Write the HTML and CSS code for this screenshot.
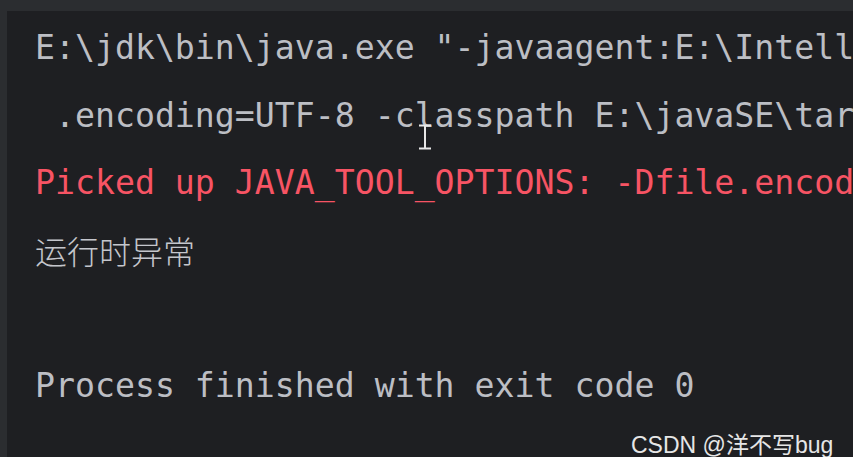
FILE: index.html
```html
<!DOCTYPE html>
<html lang="zh">
<head>
<meta charset="utf-8">
<link rel="stylesheet" href="styles.css">
</head>
<body>
<div class="topbar"></div>
<div class="main">
  <div class="gutter"></div>
  <div class="console">
    <div class="line">E:\jdk\bin\java.exe "-javaagent:E:\Intell</div>
    <div class="line"> .encoding=UTF-8 -classpath E:\javaSE\tar</div>
    <div class="line err">Picked up JAVA_TOOL_OPTIONS: -Dfile.encod</div>
    <div class="line cjk">运行时异常</div>
    <div class="line"> </div>
    <div class="line">Process finished with exit code 0</div>
  </div>
</div>
<div class="cursor"><svg width="14" height="26" viewBox="0 0 14 26"><path d="M1 1.5h12M7 1.5v23M1 24.5h12" stroke="#e8e8e8" stroke-width="2" fill="none"/></svg></div>
<div class="watermark">CSDN @洋不写bug</div>
</body>
</html>
```
FILE: styles.css
```css
html, body {
  margin: 0;
  padding: 0;
  width: 853px;
  height: 457px;
  overflow: hidden;
  background: #1e1f22;
}
body {
  display: flex;
  flex-direction: column;
  position: relative;
}
.topbar {
  height: 11px;
  background: #2b2d30;
  flex: none;
}
.main {
  flex: 1;
  display: flex;
  min-height: 0;
}
.gutter {
  width: 7px;
  background: #2b2d30;
  flex: none;
}
.console {
  flex: 1;
  padding: 3px 0 0 28px;
  font-family: "DejaVu Sans Mono", "Liberation Mono", monospace;
  font-size: 33.2px;
  color: #bcbec4;
  overflow: hidden;
}
.line {
  height: 67.5px;
  line-height: 67.5px;
  white-space: pre;
}
.err {
  color: #f75464;
}
.cjk {
  font-family: "Noto Sans CJK SC", sans-serif;
  font-weight: 300;
  font-size: 32px;
  color: #c4c6cc;
}
.cursor {
  position: absolute;
  left: 418px;
  top: 124px;
  width: 14px;
  height: 26px;
}
.cursor svg { display: block; }
.watermark {
  position: absolute;
  left: 631px;
  top: 426px;
  font-family: "Liberation Sans", Arial, "Noto Sans CJK SC", sans-serif;
  font-size: 23px;
  color: #e6e6e6;
  white-space: nowrap;
}
```
